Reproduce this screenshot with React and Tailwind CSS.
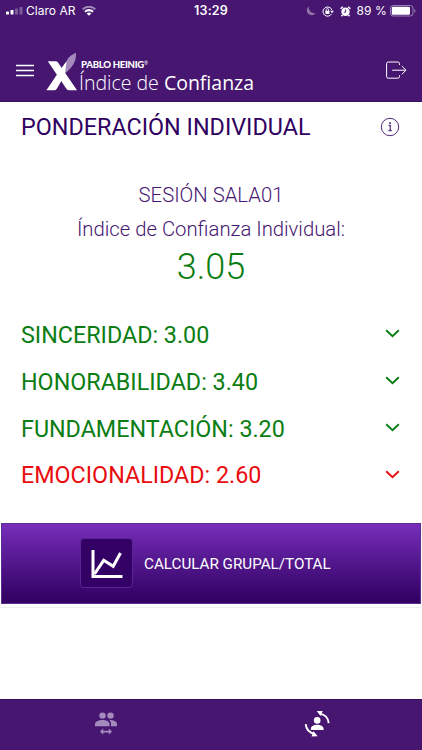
import { useState } from "react";

const scores = [
  { name: "SINCERIDAD", value: 3.0 },
  { name: "HONORABILIDAD", value: 3.4 },
  { name: "FUNDAMENTACIÓN", value: 3.2 },
  { name: "EMOCIONALIDAD", value: 2.6 },
];

function StatusBar() {
  return (
    <div className="flex h-[22px] items-center pl-[6px] pr-[6px] font-['Inter',sans-serif] text-[12px] text-white">
      <div className="flex flex-1 items-center">
        <svg width="17" height="8" viewBox="0 0 17 8" fill="#fff">
          <rect x="0" y="4.5" width="3" height="3" rx=".6" />
          <rect x="4.5" y="3" width="3" height="4.5" rx=".6" />
          <rect x="9" y="1.5" width="3" height="6" rx=".6" opacity=".3" />
          <rect x="13.5" y="0" width="3" height="7.5" rx=".6" opacity=".3" />
        </svg>
        <span className="ml-[3px] tracking-[0.03px]">Claro AR</span>
        <svg className="ml-[6px]" width="14" height="10" viewBox="0 0 14 10">
          <path d="M.7 3.3Q7-2 13.3 3.3" fill="none" stroke="#fff" strokeWidth="1.9" opacity=".5" />
          <path d="M2.9 5.7Q7 2.4 11.1 5.7" fill="none" stroke="#fff" strokeWidth="2.1" />
          <path d="M4.7 7.4Q7 5.6 9.3 7.4L7 9.8Z" fill="#fff" />
        </svg>
      </div>
      <span className="mt-px text-[12.5px] font-semibold tracking-[0.2px]">13:29</span>
      <div className="flex flex-1 items-center justify-end">
        <svg width="10" height="10" viewBox="0 0 10 10">
          <path d="M3.3.3A4.8 4.8 0 1 0 9.7 7 5.2 5.2 0 0 1 3.3.3Z" fill="#fff" opacity=".4" />
        </svg>
        <svg className="ml-[6px]" width="12" height="11" viewBox="0 0 12 11">
          <path d="M9.6 7.8A4.6 4.6 0 1 1 9.9 4" fill="none" stroke="#fff" strokeWidth="1" />
          <path d="M8.1 4.7h3.8L10 7.3Z" fill="#fff" />
          <rect x="3.4" y="4.8" width="4" height="3.2" rx=".4" fill="#fff" />
          <path d="M4.2 5V3.8a1.2 1.2 0 0 1 2.4 0V5" fill="none" stroke="#fff" strokeWidth=".9" />
        </svg>
        <svg className="ml-[6px]" width="11" height="11" viewBox="0 0 11 11">
          <path d="M.6 2.8 2.9.7M10.4 2.8 8.1.7M2.5 9l-1 1.3M8.5 9l1 1.3" stroke="#fff" strokeWidth="1.5" />
          <circle cx="5.5" cy="5.8" r="4.2" fill="#fff" />
          <path d="M5.6 3.3v2.9H3.8" fill="none" stroke="#461671" strokeWidth=".9" />
        </svg>
        <span className="ml-[6px] whitespace-pre tracking-[0.1px]">89 %</span>
        <svg className="ml-[3px]" width="26" height="12" viewBox="0 0 26 12">
          <rect x=".5" y=".5" width="22.5" height="10.5" rx="2.6" fill="none" stroke="#fff" opacity=".45" />
          <rect x="1.8" y="1.8" width="18.2" height="7.9" rx="1.3" fill="#fff" />
          <path d="M24.3 4v3.8c1.6-.7 1.6-3.1 0-3.8Z" fill="#fff" opacity=".45" />
        </svg>
      </div>
    </div>
  );
}

function Logo() {
  return (
    <div className="ml-[12px] flex h-[44px]">
      <svg width="31" height="40" viewBox="0 0 31 40">
        <path d="M30 .8C24.5 3.4 22.2 5.6 20.6 9L17.5 22.5C24.5 17 30.6 11.5 30 .8Z" fill="#a58bbd" />
        <path d="M1.8 9.2H9.6Q11.2 9.2 12 10.6L31 38.3H23.2Q21.4 38.3 20.4 36.8Z" fill="#fff" />
        <path d="M.4 38.3 12.5 20.2 20.6 9 18.9 22.8 11 36.4Q9.9 38.3 8 38.3Z" fill="#fff" />
      </svg>
      <div className="flex flex-col pt-[7px] pl-[4px] text-white">
        <div className="flex h-[13px] shrink-0 items-start font-['Lato',sans-serif] text-[9.6px] leading-[12px] font-black tracking-[-0.3px] whitespace-nowrap">
          PABLO HEINIG
          <span className="-mt-[2px] text-[5px] font-normal">®</span>
        </div>
        <div className="-ml-[2px] font-['Open_Sans',sans-serif] text-[19.5px] leading-[22px] whitespace-nowrap">
          <span className="font-light">Índice de </span>Confianza
        </div>
      </div>
    </div>
  );
}

function Header() {
  return (
    <header className="h-[102px] border-b border-[#381060] bg-[#461671]">
      <StatusBar />
      <div className="flex items-start pt-[30px] pr-[15px] pl-[16px]">
        <svg className="mt-[12px]" width="18" height="13" viewBox="0 0 18 13">
          <path d="M0 1.5h18M0 6.5h18M0 11.5h18" stroke="#fff" strokeWidth="1.3" />
        </svg>
        <Logo />
        <svg className="mt-[9px] ml-auto" width="21" height="19" viewBox="0 0 21 19" fill="none" stroke="#fff" strokeWidth="1">
          <path d="M13.5 4V2.7Q13.5 1 11.8 1H2.2Q.6 1 .6 2.7v12.8q0 1.7 1.6 1.7h9.6q1.7 0 1.7-1.7v-1.3" />
          <path d="M6.2 9.2h13.6M15.8 5l4.2 4.2-4.2 4.2" />
        </svg>
      </div>
    </header>
  );
}

function ScoreRow({ score, open, onClick }) {
  const color = score.value < 3 ? "text-[#e90c10]" : "text-[#0b7d12]";
  return (
    <button
      onClick={onClick}
      aria-expanded={open}
      className={`flex h-[46.8px] w-full items-center justify-between text-[23.3px] ${color}`}
    >
      <span>
        {score.name}: {score.value.toFixed(2)}
      </span>
      <svg className="mr-[1px] -mt-[3px]" width="15" height="9" viewBox="0 0 15 9">
        <path d="m1.2 1.3 6.3 6 6.3-6" fill="none" stroke="currentColor" strokeWidth="1.9" />
      </svg>
    </button>
  );
}

function TabBar() {
  return (
    <nav className="flex h-[51px] border-t border-[#381060] bg-[#461671]">
      <button className="flex flex-1 items-start justify-center pt-[11px]">
        <svg width="24" height="25" viewBox="0 0 24 25" fill="#a58bbd">
          <circle cx="8.5" cy="4.6" r="3.2" />
          <circle cx="16.5" cy="4.6" r="3.2" />
          <path d="M1 15.2v-2.1C1 10.4 5.5 9 8.5 9s7 1.4 7 4.1v2.1Z" />
          <path d="M15.2 9.1C18.7 9 23 10.4 23 13.1v2.1h-6v-2.3c0-1.7-.7-2.9-1.8-3.8Z" />
          <path d="m6 20.6 3.2-3.1v2.2h5.6v-2.2l3.2 3.1-3.2 3.1v-2.2H9.2v2.2Z" />
        </svg>
      </button>
      <button className="flex flex-1 items-start justify-center pt-[10px]">
        <svg width="26" height="28" viewBox="0 0 26 28" fill="#fff">
          <circle cx="13.2" cy="10.4" r="3.3" />
          <path d="M6.8 20v-1.3c0-2.7 3.8-4 6.4-4s6.4 1.3 6.4 4V20Z" />
          <path d="M15.5 3.6c5.4.9 8.8 4.6 9.2 9.6" fill="none" stroke="#fff" strokeWidth="1.9" />
          <path d="m12.6 1 6.1-.1-1.9 5.2Z" />
          <path d="M1.7 14.2c.4 5 3.7 8.7 9.1 9.7" fill="none" stroke="#fff" strokeWidth="1.9" />
          <path d="m13.7 26.3-6.2.3 2-5.4Z" />
        </svg>
      </button>
    </nav>
  );
}

export default function App() {
  const [openScore, setOpenScore] = useState(null);

  return (
    <div className="flex h-[750px] w-[422px] flex-col overflow-hidden bg-white font-['Roboto',sans-serif]">
      <Header />
      <main className="flex flex-1 flex-col">
        <div className="flex h-[51px] items-center justify-between pr-[22px] pl-[21px]">
          <h1 className="text-[23.35px] text-[#300060]">PONDERACIÓN INDIVIDUAL</h1>
          <svg className="-mt-[2px]" width="20" height="20" viewBox="0 0 20 20" fill="none" stroke="#532a7b">
            <circle cx="10" cy="10" r="8.7" strokeWidth="1" />
            <path d="M8.6 8.3h1.6v5M8.5 13.6h3.2" strokeWidth="1.2" />
            <circle cx="10" cy="6" r="1" fill="#532a7b" stroke="none" />
          </svg>
        </div>

        <div className="flex flex-col items-center pt-[25px] font-light text-[#461671]">
          <p className="text-[20.3px] leading-[34px]">SESIÓN SALA01</p>
          <p className="text-[20.3px] leading-[34px]">Índice de Confianza Individual:</p>
          <p className="text-[36px] leading-[42px] text-[#0b7d12]">3.05</p>
        </div>

        <div className="mt-[24px] pr-[21px] pl-[21px]">
          {scores.map((score) => (
            <ScoreRow
              key={score.name}
              score={score}
              open={openScore === score.name}
              onClick={() => setOpenScore(openScore === score.name ? null : score.name)}
            />
          ))}
        </div>

        <div className="mt-[23.8px] border-b border-[#eeeeee] px-[1px] pb-[3px]">
          <button className="flex h-[81px] w-full items-center border border-[#5a2d91] bg-linear-to-b from-[#772dba] to-[#300060] pl-[78px] text-[15.2px] text-white">
            <span className="flex h-[50px] w-[53px] items-center justify-center rounded-[4px] border border-[#5c2496] bg-[#330066] pt-[2px]">
              <svg width="32" height="29" viewBox="0 0 32 29" fill="none" stroke="#fff">
                <path d="M2 0v26.5h29.5" strokeWidth="3" />
                <path d="m3.5 24 9.2-13.7 9.5 6L29.5 3" strokeWidth="3" />
              </svg>
            </span>
            <span className="mt-[2px] ml-[11px]">CALCULAR GRUPAL/TOTAL</span>
          </button>
        </div>
      </main>
      <TabBar />
    </div>
  );
}
